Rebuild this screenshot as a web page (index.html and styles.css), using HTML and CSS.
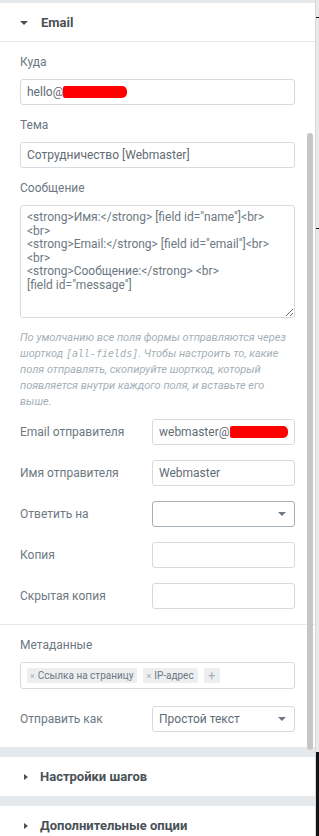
FILE: index.html
```html
<!DOCTYPE html>
<html lang="ru">
<head>
    <meta charset="UTF-8" />
    <meta name="viewport" content="width=device-width, initial-scale=1.0"/>
    <title>Email — настройки формы</title>
    <link rel="stylesheet" href="styles.css">
</head>
<body>

    <div class="page">
        <div class="panel">
            <div class="gap gap-top"></div>

            <!-- Email section (open) -->
            <section class="section">
                <div class="section-head open">
                    <span class="caret-down"></span>
                    <span class="section-title">Email</span>
                </div>

                <div class="section-body">
                    <div class="control">
                        <div class="label">Куда</div>
                        <div class="input">hello@<span class="redact redact-to"></span></div>
                    </div>

                    <div class="control">
                        <div class="label">Тема</div>
                        <div class="input">Сотрудничество [Webmaster]</div>
                    </div>

                    <div class="control">
                        <div class="label">Сообщение</div>
                        <textarea class="textarea">&lt;strong&gt;Имя:&lt;/strong&gt; [field id="name"]&lt;br&gt;
&lt;br&gt;
&lt;strong&gt;Email:&lt;/strong&gt; [field id="email"]&lt;br&gt;
&lt;br&gt;
&lt;strong&gt;Сообщение:&lt;/strong&gt; &lt;br&gt;
[field id="message"]</textarea>
                    </div>

                    <p class="note">По умолчанию все поля формы отправляются через шорткод <code>[all-fields]</code>. Чтобы настроить то, какие поля отправлять, скопируйте шорткод, который появляется внутри каждого поля, и вставьте его выше.</p>

                    <div class="row">
                        <div class="row-label">Email отправителя</div>
                        <div class="input input-half">webmaster@<span class="redact redact-from"></span></div>
                    </div>
                    <div class="row">
                        <div class="row-label">Имя отправителя</div>
                        <div class="input input-half">Webmaster</div>
                    </div>
                    <div class="row">
                        <div class="row-label">Ответить на</div>
                        <div class="input input-half select select-active"><span></span><span class="caret-select"></span></div>
                    </div>
                    <div class="row">
                        <div class="row-label">Копия</div>
                        <div class="input input-half"></div>
                    </div>
                    <div class="row">
                        <div class="row-label">Скрытая копия</div>
                        <div class="input input-half"></div>
                    </div>
                </div>

                <div class="section-body separated">
                    <div class="control">
                        <div class="label">Метаданные</div>
                        <div class="tags">
                            <span class="tag"><span class="tag-x">×</span>Ссылка на страницу</span>
                            <span class="tag"><span class="tag-x">×</span>IP-адрес</span>
                            <span class="tag tag-add">+</span>
                        </div>
                    </div>
                    <div class="row">
                        <div class="row-label">Отправить как</div>
                        <div class="input input-half select"><span>Простой текст</span><span class="caret-select"></span></div>
                    </div>
                </div>
            </section>

            <div class="gap"></div>

            <section class="section">
                <div class="section-head">
                    <span class="caret-right"></span>
                    <span class="section-title">Настройки шагов</span>
                </div>
            </section>

            <div class="gap"></div>

            <section class="section">
                <div class="section-head">
                    <span class="caret-right"></span>
                    <span class="section-title">Дополнительные опции</span>
                </div>
            </section>

            <!-- overlay scrollbar -->
            <div class="scroll-thumb"></div>
        </div>
        <div class="edge"></div>
    </div>

</body>
</html>
```

FILE: styles.css
```css
/* Colours of the editor panel */
:root {
    --band: #e6e9ec;        /* gaps between sections */
    --line: #e6e9ec;        /* separators */
    --border: #d5dadf;      /* input borders */
    --label: #6d7882;       /* control labels */
    --text: #626c75;        /* input text */
    --title: #495157;       /* section titles */
    --muted: #a4afb7;       /* notes, tag crosses */
}

* {
    box-sizing: border-box;
}

html,
body {
    margin: 0;
    height: 100%;
    overflow: hidden;
}

body {
    font-family: Roboto, "Liberation Sans", sans-serif;
    font-size: 12px;
    color: var(--label);
    background: #fff;
}

.page {
    display: flex;
    min-height: 100%;
}

/* Main panel */
.panel {
    position: relative;
    width: 315px;
    background: #fff;
}

.gap {
    height: 10px;
    background: var(--band);
}

.gap-top {
    height: 3px;
}

/* Section heading */
.section-head {
    display: flex;
    align-items: center;
    height: 39px;
    padding-left: 20px;
}

.section-head.open {
    height: 39px;
    border-bottom: 1px solid var(--line);
}

.section-title {
    font-size: 13px;
    font-weight: 700;
    color: var(--title);
    margin-left: 12px;
}

.caret-down {
    width: 0;
    height: 0;
    border-left: 4px solid transparent;
    border-right: 4px solid transparent;
    border-top: 4px solid var(--title);
    margin-top: 1px;
    margin-right: 1px;
}

.caret-right {
    width: 0;
    height: 0;
    border-top: 3.5px solid transparent;
    border-bottom: 3.5px solid transparent;
    border-left: 4px solid var(--title);
    margin-left: 4px;
}

/* Section contents */
.section-body {
    padding: 12px 20px 15px;
}

.section-body.separated {
    border-top: 1px solid var(--line);
    padding-bottom: 15px;
}

.control {
    margin-bottom: 12px;
}

.label {
    line-height: 16px;
    margin-bottom: 9px;
}

.input {
    display: flex;
    align-items: center;
    height: 26px;
    padding: 0 6px;
    border: 1px solid var(--border);
    border-radius: 3px;
    color: var(--text);
    white-space: nowrap;
    overflow: hidden;
}

.textarea {
    display: block;
    width: 100%;
    height: 113px;
    margin: 0;
    padding: 5px 6px;
    border: 1px solid var(--border);
    border-radius: 3px;
    font-family: Roboto, "Liberation Sans", sans-serif;
    font-size: 12px;
    line-height: 13.5px;
    color: var(--label);
    resize: vertical;
    outline: none;
}

/* Red redaction marks over the addresses */
.redact {
    display: inline-block;
    height: 12px;
    background: #ff0000;
    border-radius: 2px 5px 5px 2px;
}

.redact-to {
    width: 64px;
}

.redact-from {
    width: 60px;
}

.note {
    margin: 10px 0 9px;
    font-size: 11px;
    line-height: 16px;
    font-style: italic;
    color: var(--muted);
}

.note code {
    display: inline-block;
    font-family: "DejaVu Sans Mono", monospace;
    font-size: 10px;
    font-style: italic;
    line-height: 12px;
}

/* Label / input rows */
.row {
    display: flex;
    align-items: center;
    margin-top: 15px;
}

.note + .row {
    margin-top: 0;
}

.control + .row {
    margin-top: 17px;
}

.row-label {
    flex: 1;
}

.input-half {
    width: 143px;
}

.select {
    justify-content: space-between;
}

.select-active {
    border-color: #a4afb7;
}

.caret-select {
    width: 0;
    height: 0;
    border-left: 4px solid transparent;
    border-right: 4px solid transparent;
    border-top: 4px solid var(--label);
    margin-right: 2px;
}

/* Metadata tags */
.tags {
    display: flex;
    align-items: center;
    gap: 6px;
    height: 27px;
    padding: 0 6px;
    border: 1px solid var(--border);
    border-radius: 3px;
}

.tag {
    display: flex;
    align-items: center;
    height: 15px;
    padding: 0 4px 0 3px;
    background: #eceef0;
    border-radius: 2px;
    font-size: 10px;
    color: var(--label);
}

.tag-x {
    font-size: 9px;
    color: var(--muted);
    margin-right: 3px;
}

.tag-add {
    width: 16px;
    justify-content: center;
    padding: 0;
    font-size: 13px;
    color: var(--muted);
}

/* Overlay scrollbar */
.scroll-thumb {
    position: absolute;
    top: 133px;
    left: 307px;
    width: 6px;
    height: 617px;
    border-radius: 3px;
    background: #c6c6c6;
}

/* Strip at the right border of the window */
.edge {
    width: 4px;
    background: linear-gradient(#e9e9e9 0 17px, #111 17px 18px, #e9e9e9 18px 228px, #111 228px 229px, #e9e9e9 229px 752px, #141414 752px);
    box-shadow: inset 1px 0 #d8d8d8;
}
```
